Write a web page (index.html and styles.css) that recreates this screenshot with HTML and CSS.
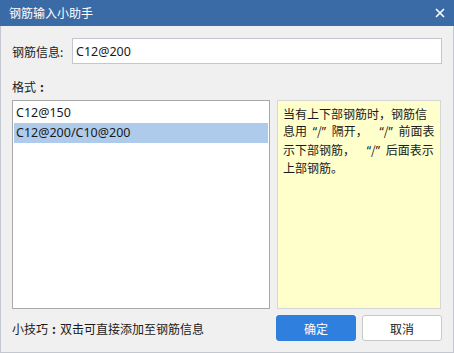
FILE: index.html
```html
<!DOCTYPE html>
<html lang="zh-CN">

<head>
    <meta charset="UTF-8">
    <meta name="viewport" content="width=device-width, initial-scale=1.0">
    <title>钢筋输入小助手</title>
    <link rel="stylesheet" href="styles.css">
</head>

<body>
    <div class="dialog">
        <div class="titlebar">
            <span class="title">钢筋输入小助手</span>
            <span class="close">
                <svg width="10" height="10" viewBox="0 0 10 10">
                    <path d="M1 1 L9 9 M9 1 L1 9" stroke="#ffffff" stroke-width="1.6" fill="none" />
                </svg>
            </span>
        </div>

        <div class="content">
            <div class="info-row">
                <label for="rebarInfo">钢筋信息:</label>
                <input type="text" id="rebarInfo" value="C12@200">
            </div>

            <div class="format-label">格式<span class="colon">:</span></div>

            <div class="panels">
                <ul class="format-list">
                    <li>C12@150</li>
                    <li class="selected">C12@200/C10@200</li>
                </ul>
                <div class="hint">当有上下部钢筋时，钢筋信息用<span class="q-open">“</span>/<span class="q-close">”</span>隔开，<span class="q-open gap">“</span>/<span class="q-close">”</span>前面表示下部钢筋，<span class="q-open gap">“</span>/<span class="q-close">”</span>后面表示上部钢筋。</div>
            </div>

            <div class="footer">
                <span class="tip">小技巧<span class="colon">:</span>双击可直接添加至钢筋信息</span>
                <button class="btn btn-primary" type="button">确定</button>
                <button class="btn" type="button">取消</button>
            </div>
        </div>
    </div>
</body>

</html>
```

FILE: styles.css
```css
body {
    margin: 0;
    font-family: "Noto Sans CJK SC", "Noto Sans", sans-serif;
    font-size: 12px;
    color: #1a1a1a;
    background-color: #f0f0f0;
}

.dialog {
    width: 454px;
    height: 353px;
    box-sizing: border-box;
    background-color: #f0f0f0;
    border: 1px solid #c3c8d0;
    border-top: none;
    display: flex;
    flex-direction: column;
}

.titlebar {
    height: 26px;
    margin: 0 -1px;
    background-color: #3a6ba6;
    color: #ffffff;
    display: flex;
    align-items: center;
    justify-content: space-between;
    padding: 0 9px;
}

.title {
    font-size: 12px;
    line-height: 26px;
}

.close {
    display: flex;
}

.content {
    flex: 1;
    padding: 12px 11px 11px 11px;
    display: flex;
    flex-direction: column;
}

.info-row {
    display: flex;
    align-items: center;
    height: 26px;
}

.info-row label {
    width: 60px;
    flex-shrink: 0;
}

.info-row input {
    flex: 1;
    height: 26px;
    box-sizing: border-box;
    border: 1px solid #c2c6ce;
    background-color: #ffffff;
    padding: 0 3px;
    font-family: "Noto Sans", "Noto Sans CJK SC", sans-serif;
    font-size: 12.5px;
    color: #1a1a1a;
    outline: none;
}

.colon {
    display: inline-block;
    width: 12px;
    text-align: center;
    font-weight: bold;
}

.format-label {
    margin-top: 14px;
    line-height: 17px;
}

.panels {
    display: flex;
    gap: 7px;
    margin-top: 5px;
    height: 209px;
}

.format-list {
    list-style: none;
    margin: 0;
    padding: 2px 1px;
    width: 258px;
    box-sizing: border-box;
    background-color: #ffffff;
    border: 1px solid #a9a9a9;
    font-family: "Noto Sans", "Noto Sans CJK SC", sans-serif;
    font-size: 12.5px;
}

.format-list li {
    height: 20px;
    line-height: 20px;
    padding-left: 2px;
}

.format-list li.selected {
    background-color: #afcbec;
}

.hint {
    width: 164px;
    box-sizing: border-box;
    background-color: #ffffcc;
    border: 1px solid #d6d6d6;
    padding: 4px 5px;
    line-height: 17.3px;
}

.q-open,
.q-close {
    display: inline-block;
    width: 10px;
    font-family: "Noto Sans", sans-serif;
}

.q-open {
    text-align: right;
}

.q-close {
    text-align: left;
}

.q-open.gap {
    margin-left: 6px;
}

.footer {
    display: flex;
    align-items: center;
    margin-top: 6px;
    gap: 6px;
}

.tip {
    flex: 1;
}

.btn {
    width: 80px;
    height: 26px;
    border: 1px solid #c9c9c9;
    border-radius: 3px;
    background-color: #ffffff;
    font-family: "Noto Sans CJK SC", sans-serif;
    font-size: 12px;
    color: #1a1a1a;
    padding: 0;
    cursor: pointer;
}

.btn-primary {
    background-color: #2e7fde;
    border-color: #2e7fde;
    color: #ffffff;
}
```
